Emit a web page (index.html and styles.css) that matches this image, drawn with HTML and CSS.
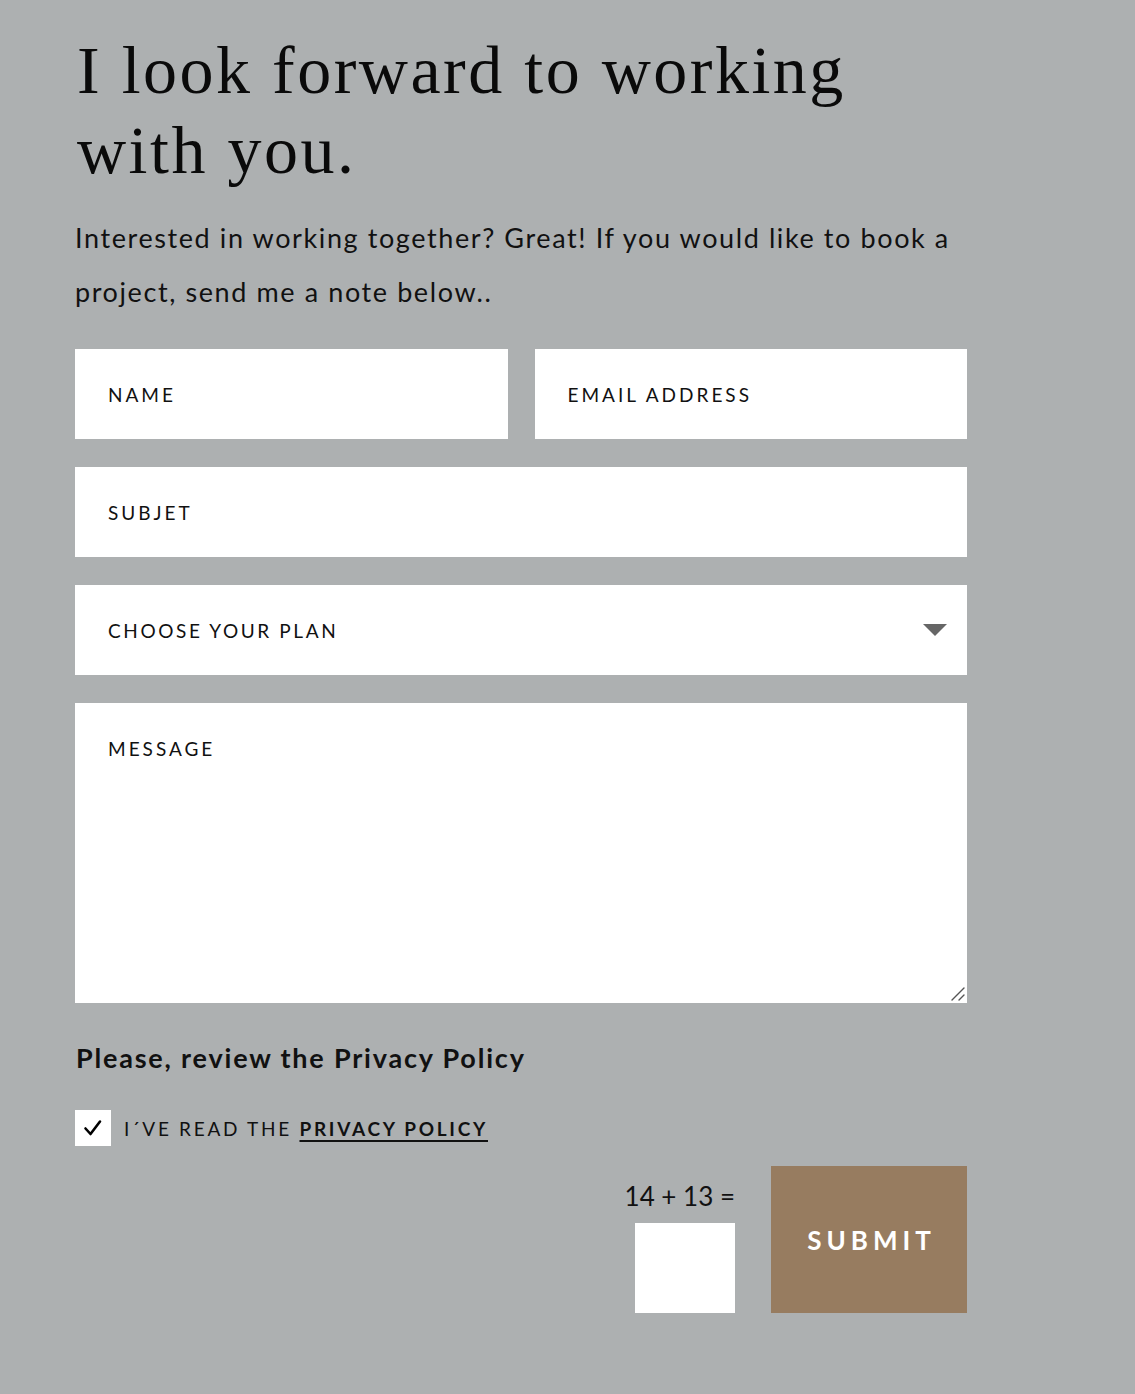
FILE: index.html
```html
<!DOCTYPE html>
<html lang="en">
<head>
<meta charset="utf-8">
<title>Contact</title>
<link rel="stylesheet" href="styles.css">
</head>
<body>
<main class="page">
  <h1 class="title">I look forward to working with you.</h1>
  <p class="intro">Interested in working together? Great! If you would like to book a project, send me a note below..</p>
  <form class="form">
    <div class="row two">
      <input class="field" type="text" placeholder="NAME">
      <input class="field" type="email" placeholder="EMAIL ADDRESS">
    </div>
    <div class="row">
      <input class="field" type="text" placeholder="SUBJET">
    </div>
    <div class="row overlay-wrap">
      <select class="field select">
        <option>CHOOSE YOUR PLAN</option>
      </select>
      <svg class="caret" width="24" height="12" viewBox="0 0 24 12"><path d="M0 0 L24 0 L12 12 Z" fill="#666"/></svg>
    </div>
    <div class="row overlay-wrap">
      <textarea class="field area" placeholder="MESSAGE"></textarea>
      <svg class="grip" width="16" height="16" viewBox="0 0 16 16"><path d="M2 14 L14 2 M9 14 L14 9" stroke="#555" stroke-width="1.4" stroke-linecap="round"/></svg>
    </div>
    <h2 class="policy-title">Please, review the Privacy Policy</h2>
    <label class="consent">
      <span class="box"><svg width="20" height="18" viewBox="0 0 20 18"><path d="M2.5 9.5 L7.5 15 L17 2.5" fill="none" stroke="#000" stroke-width="2.6" stroke-linecap="round" stroke-linejoin="round"/></svg></span>
      <span class="consent-text">I´VE READ THE <a class="policy-link" href="#">PRIVACY POLICY</a></span>
    </label>
    <div class="actions">
      <div class="captcha">
        <span class="sum">14 + 13 =</span>
        <input class="answer" type="text">
      </div>
      <button class="submit" type="button">SUBMIT</button>
    </div>
  </form>
</main>
</body>
</html>
```
FILE: styles.css
```css
* { box-sizing: border-box; }
html, body { margin: 0; padding: 0; }
body {
  background: #adb0b1;
  color: #111;
  font-family: Lato, "Liberation Sans", sans-serif;
  min-height: 1394px;
}
.page {
  width: 892px;
  margin-left: 75px;
  padding-top: 30px;
}
.title {
  font-family: "Liberation Serif", serif;
  font-weight: 400;
  font-size: 68px;
  line-height: 80px;
  letter-spacing: 2.5px;
  margin: 0 0 0 2px;
  max-width: 860px;
  color: #0a0a0a;
}
.intro {
  font-size: 27px;
  line-height: 54px;
  margin: 21px 0 0;
  letter-spacing: 1.6px;
}
.form { margin-top: 30px; }
.row { margin-bottom: 28px; }
.row.two {
  display: grid;
  grid-template-columns: 1fr 1fr;
  gap: 27px;
}
.field {
  display: block;
  width: 100%;
  height: 90px;
  border: 0;
  border-radius: 0;
  background: #fff;
  padding: 0 33px;
  font-family: Lato, "Liberation Sans", sans-serif;
  font-size: 19px;
  letter-spacing: 3px;
  color: #111;
  outline: none;
}
.field::placeholder { color: #111; opacity: 1; }
.overlay-wrap { position: relative; }
.select {
  appearance: none;
  -webkit-appearance: none;
  letter-spacing: 2.6px;
}
.caret {
  position: absolute;
  right: 20px;
  top: 39px;
  pointer-events: none;
}
.area {
  height: 300px;
  padding-top: 34px;
  resize: none;
  font-family: Lato, "Liberation Sans", sans-serif;
}
.grip {
  position: absolute;
  right: 1px;
  bottom: 1px;
  pointer-events: none;
}
.policy-title {
  font-size: 27px;
  font-weight: 700;
  margin: 37px 0 0 1px;
  letter-spacing: 1.8px;
  line-height: 36px;
}
.consent {
  display: flex;
  align-items: center;
  gap: 13px;
  margin-top: 34px;
}
.box {
  width: 36px;
  height: 36px;
  background: #fff;
  display: flex;
  align-items: center;
  justify-content: center;
}
.consent-text {
  font-size: 19px;
  letter-spacing: 2.7px;
}
.policy-link {
  color: #111;
  font-weight: 700;
  text-decoration: underline;
  text-underline-offset: 4px;
  text-decoration-thickness: 2px;
}
.actions {
  display: flex;
  justify-content: flex-end;
  gap: 36px;
  margin-top: 20px;
}
.captcha {
  display: flex;
  flex-direction: column;
  align-items: flex-end;
  justify-content: flex-end;
}
.sum {
  font-size: 26px;
  line-height: 30px;
  margin-bottom: 12px;
}
.answer {
  width: 100px;
  height: 90px;
  border: 0;
  background: #fff;
  outline: none;
}
.submit {
  width: 196px;
  height: 147px;
  border: 0;
  background: #977c60;
  color: #fff;
  font-family: Lato, "Liberation Sans", sans-serif;
  font-weight: 700;
  font-size: 26px;
  letter-spacing: 5px;
  padding: 0 0 0 5px;
}
```
